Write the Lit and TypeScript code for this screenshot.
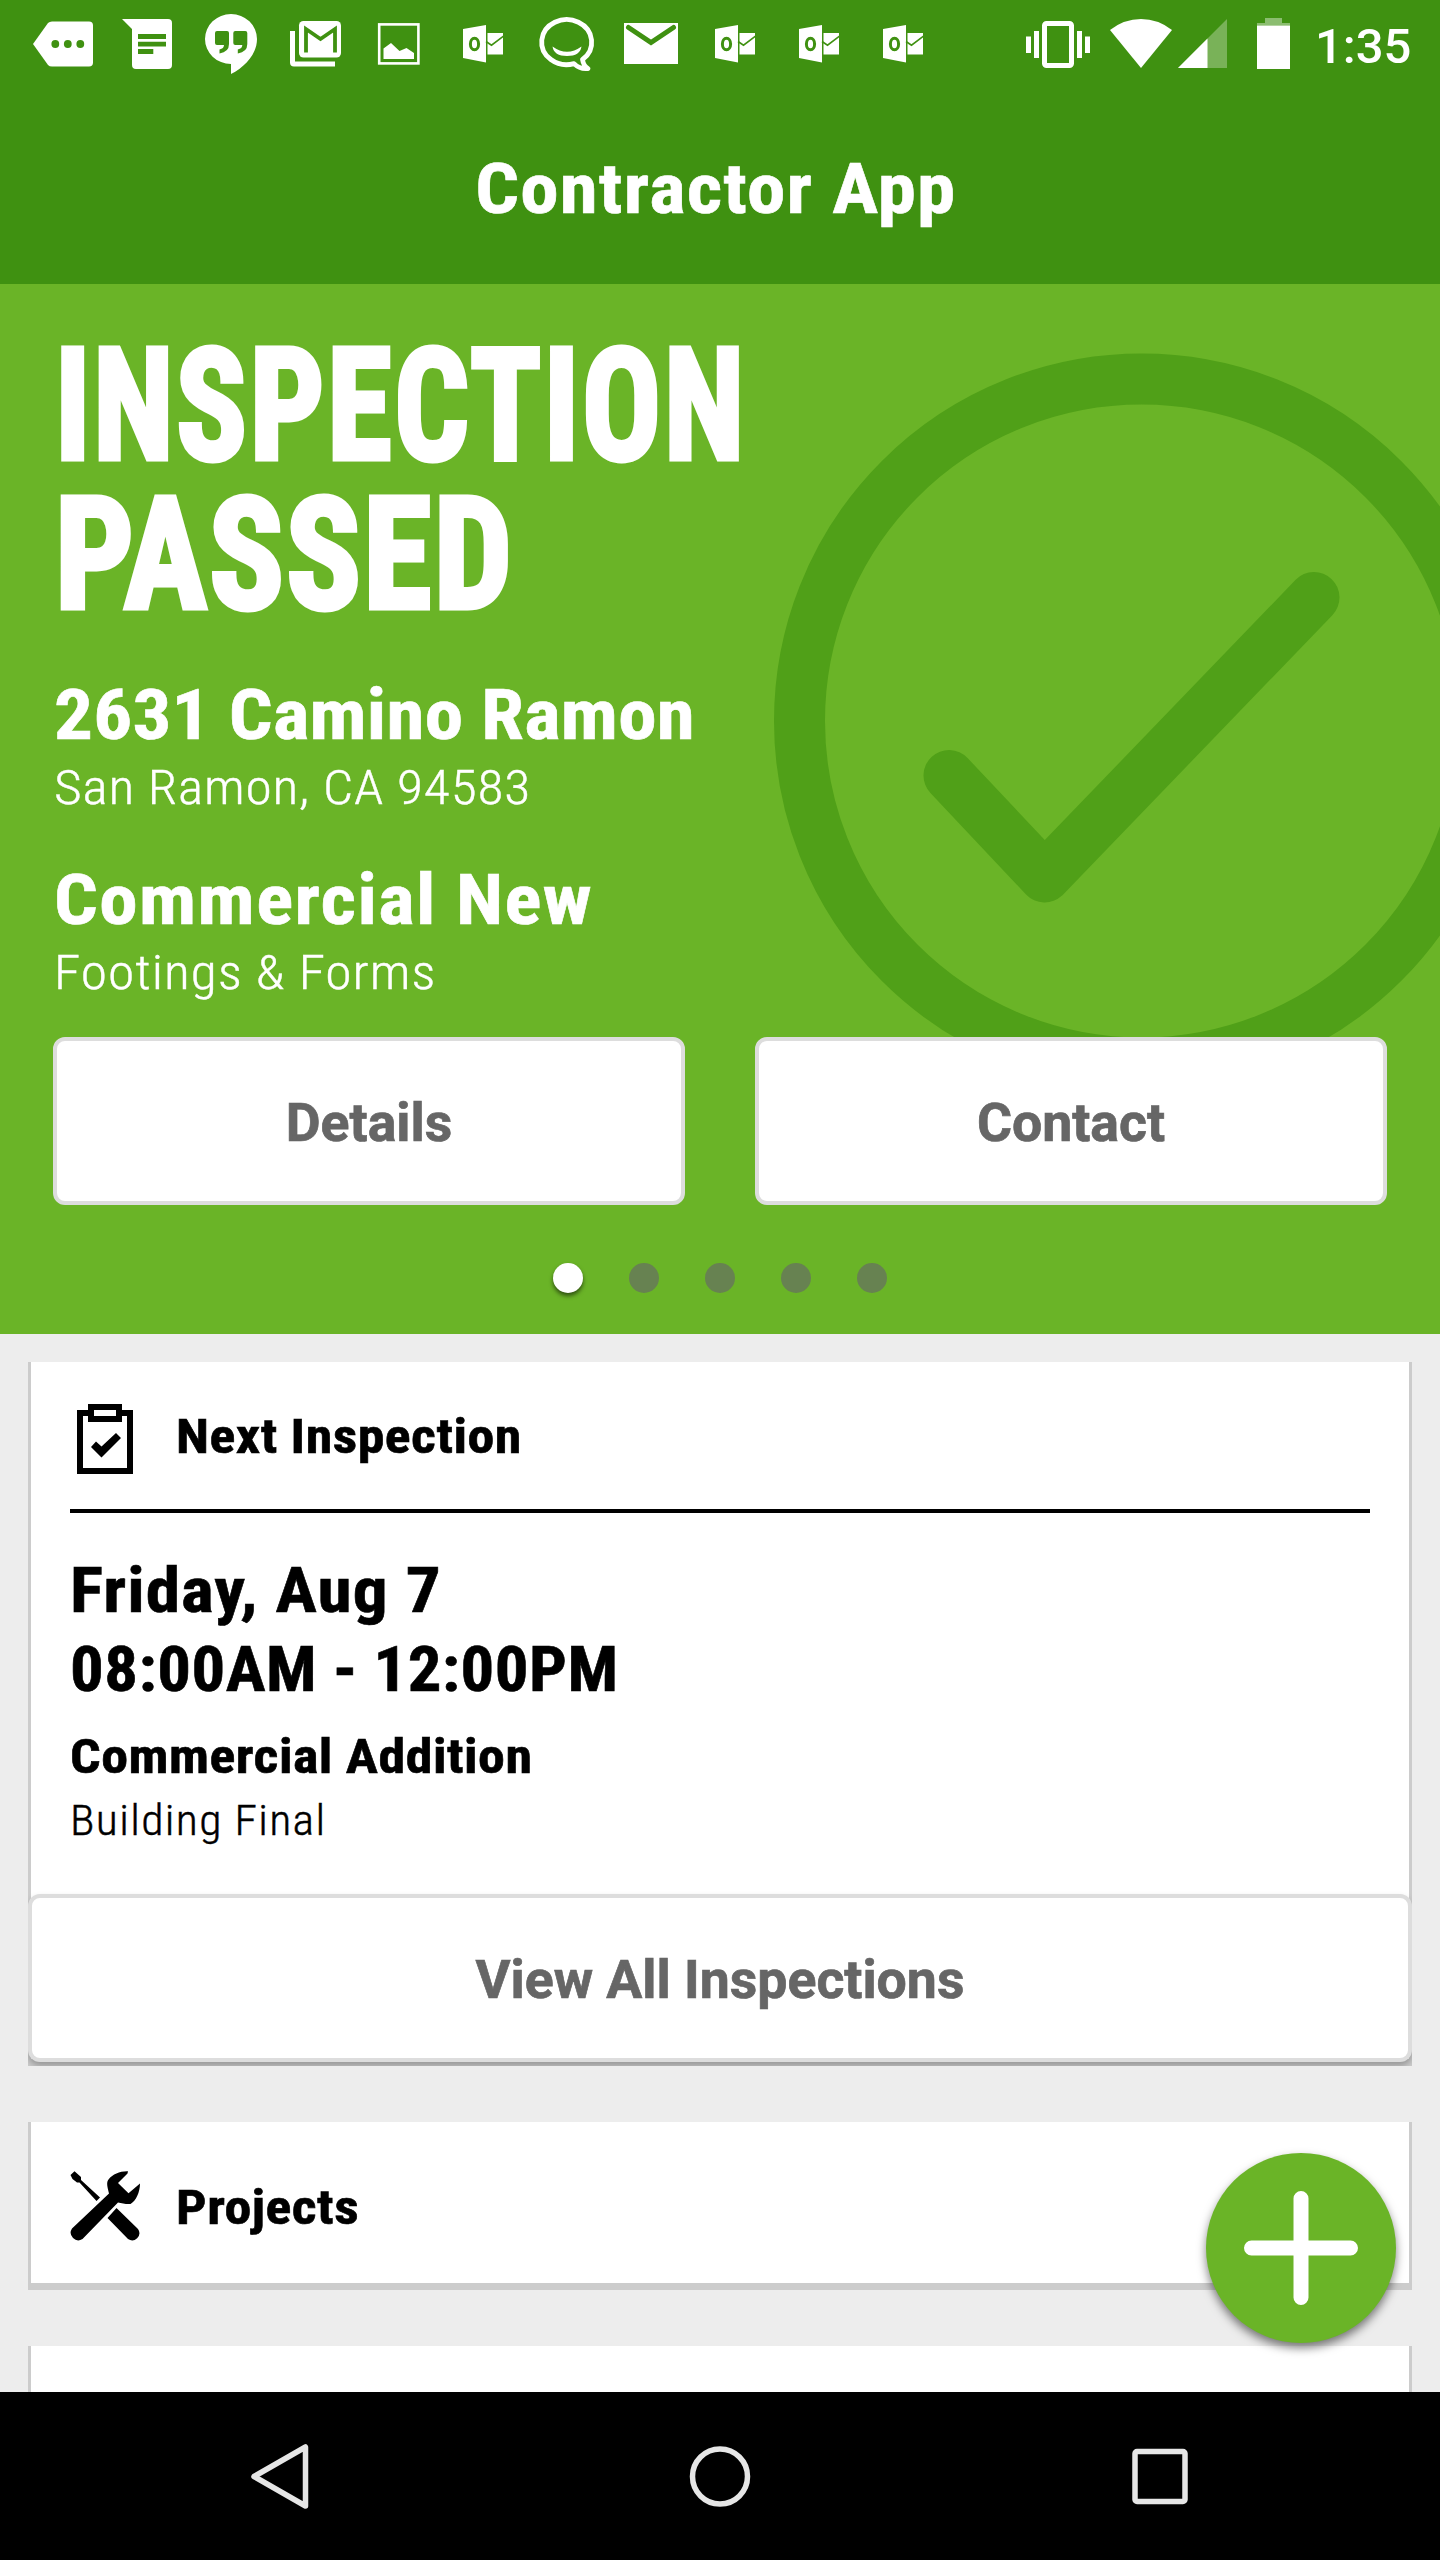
import { LitElement, html, svg, css } from "lit";

const G = "#3f9111";

const outlook = svg`
  <path d="M22 29L45 25V62.5L22 58Z" fill="#fff"/>
  <ellipse cx="33.5" cy="44" rx="4.1" ry="5.8" fill="none" stroke=${G} stroke-width="3"/>
  <path d="M46.5 33H62V54.5H46.5Z" fill="#fff"/>
  <path d="M45 41.5L50.5 45.2L62.5 36.2" fill="none" stroke=${G} stroke-width="1.6"/>`;

/* Notification icons, each drawn in an 84 x 90 cell. */
const notifications = [
  svg`<path fill="#fff" d="M12 44L27 23Q28.500 21.500 31 21.500H68a4 4 0 0 1 4 4V62.500a4 4 0 0 1-4 4H31Q28.500 66.500 27 65Z"/>
    <g fill=${G}><circle cx="34.300" cy="44" r="3.900"/><circle cx="46.800" cy="44" r="3.900"/><circle cx="59.300" cy="44" r="3.900"/></g>`,
  svg`<path fill="#fff" d="M17 19H63a4 4 0 0 1 4 4V65a4 4 0 0 1-4 4H31a4 4 0 0 1-4-4V29Z"/>
    <path fill=${G} d="M33 34H61V39H33ZM33 41.700H61V46.500H33ZM33 49H48.300V54H33Z"/>`,
  svg`<path fill="#fff" d="M42 14A26 25 0 0 0 42 64V74C56 67 68 54 68 39A26 25 0 0 0 42 14Z"/>
    <g fill=${G}><path d="M26 33a2 2 0 0 1 2-2H38a2 2 0 0 1 2 2V44Q40 52 30.500 53.500V49.500Q35 48.500 35 45H28a2 2 0 0 1-2-2Z"/>
    <path transform="translate(18.300)" d="M26 33a2 2 0 0 1 2-2H38a2 2 0 0 1 2 2V44Q40 52 30.500 53.500V49.500Q35 48.500 35 45H28a2 2 0 0 1-2-2Z"/></g>`,
  svg`<path fill="#fff" d="M17 31H22V61.500H62V66.500H21a4 4 0 0 1-4-4Z"/><rect x="26" y="21" width="42" height="36.500" rx="4.500" fill="#fff"/>
    <path fill="none" stroke=${G} stroke-width="3.800" d="M33 52.500V29L47.500 39L62 29V52.500"/>`,
  svg`<rect x="22.200" y="24.400" width="39.200" height="39" fill="none" stroke="#fff" stroke-width="2.600"/>
    <path fill="#fff" d="M26.500 48.500L34 43L42.500 51L49.500 48L57 53V59H26.500Z"/>`,
  outlook,
  svg`<path fill="none" stroke="#fff" stroke-width="4.800" stroke-linejoin="round" d="M49 63.600A25 22.500 0 1 1 57.500 59.500Q58.500 66 63 68.500Q55 69.500 49 63.600Z"/>
    <path fill="#fff" d="M27.500 46.500Q42 57 56.500 46.500Q55 56 42 56Q29 56 27.500 46.500Z"/>`,
  svg`<rect x="15" y="23" width="54" height="41" fill="#fff"/>
    <path fill="none" stroke=${G} stroke-width="5" stroke-linecap="round" d="M19.500 27.500L42 42.500L64.500 27.500"/>`,
  outlook,
  outlook,
  outlook,
];

class AppRoot extends LitElement {
  static styles = css`
    :host { display: block; }
    .screen {
      position: relative; width: 1440px; height: 2560px; overflow: hidden;
      display: flex; flex-direction: column; background: #ededed;
      font-family: Roboto, sans-serif; color: #000;
    }
    svg { display: block; flex: none; }
    .status { display: flex; height: 90px; flex: none; background: #3f9111; padding-left: 21px; box-sizing: border-box; }
    .system { display: flex; margin-left: auto; }
    .time { width: 134px; box-sizing: border-box; padding: 2px 0 0 9px; font-size: 49px; font-weight: 500; line-height: 90px; color: #fff; }
    .appbar {
      height: 194px; flex: none; box-sizing: border-box; padding: 4px 8px 0 0; background: #3f9111; color: #fff;
      display: flex; align-items: center; justify-content: center;
    }
    .din {
      font-stretch: 75%; font-weight: 700; white-space: nowrap; width: max-content;
      transform: scaleX(1.1); transform-origin: 0 0; -webkit-text-stroke: 0.6px currentColor;
    }
    .light { font-weight: 300; -webkit-text-stroke: 0.4px currentColor; transform: scaleX(1.09); }
    .title { font-size: 70px; line-height: 80px; letter-spacing: 1.1px; transform-origin: 50% 0; }
    .hero {
      position: relative; height: 1050px; flex: none; box-sizing: border-box; padding: 48px 53px 0 54px;
      background: #6ab427; color: #fff; overflow: hidden;
    }
    .mark { position: absolute; left: 774px; top: 69px; }
    .headline { margin-left: 1px; font-stretch: 75%; font-weight: 700; font-size: 155px; line-height: 149px; white-space: nowrap; -webkit-text-stroke: 5px currentColor; }
    .headline div { width: max-content; transform-origin: 0 0; }
    .l1 { transform: scaleX(0.846); letter-spacing: 3.3px; }
    .l2 { transform: scaleX(0.895); letter-spacing: 2.5px; }
    .big { font-size: 70px; line-height: 80px; }
    .sub { font-size: 49px; line-height: 60px; margin-top: 3px; }
    .address { margin-top: 45px; letter-spacing: 0.25px; }
    .city { letter-spacing: 0.75px; }
    .kind { margin-top: 42px; letter-spacing: 1.3px; }
    .task { letter-spacing: 0.95px; }
    .actions { position: relative; display: grid; grid-template-columns: 1fr 1fr; gap: 70px; margin: 34px 0 0 -1px; }
    .btn {
      display: flex; align-items: center; justify-content: center; height: 168px; box-sizing: border-box;
      border: 4px solid #ddd; border-radius: 12px; background: #fff; color: #666;
      font-family: inherit; font-size: 53.6px; font-weight: 700; padding: 3px 0 0; margin: 0;
      -webkit-text-stroke: 0.7px currentColor;
    }
    .dots { display: flex; gap: 46px; justify-content: center; margin: 58px 0 0 -2px; }
    .dot { width: 30px; height: 30px; border-radius: 50%; background: #678251; }
    .dot.on { background: #fff; box-shadow: 0 3px 4px rgba(0, 0, 0, 0.55); }
    .list { flex: 1; min-height: 0; overflow: hidden; display: flex; flex-direction: column; gap: 56px; padding: 28px 28px 0; }
    .card { flex: none; box-sizing: border-box; background: #fff; border: solid #ccc; border-width: 0 3px 7px; padding: 0 39px; clip-path: inset(0); }
    .head { display: flex; align-items: center; gap: 36px; height: 147px; padding-top: 3px; box-sizing: border-box; }
    .head .din { font-size: 49px; line-height: 60px; letter-spacing: 0.45px; }
    .head.ruled { border-bottom: 4px solid #000; height: 151px; }
    .head.ruled svg { margin-top: 4px; }
    .head.plain { height: 161px; padding-top: 11px; }
    .head.plain svg { margin-bottom: 4px; }
    .when { font-size: 63px; line-height: 79px; margin-top: 38px; }
    .day { letter-spacing: 0.95px; }
    .hours { letter-spacing: 0.45px; transform: scaleX(1.06); }
    .scope { font-size: 49px; line-height: 60px; margin-top: 18px; letter-spacing: 0.45px; }
    .stage { font-size: 42px; line-height: 54px; margin-top: 7px; letter-spacing: 1.2px; }
    .all { width: calc(100% + 84px); margin: 46px -42px -3px; box-shadow: 0 4px 6px rgba(0, 0, 0, 0.25); }
    .stub { height: 168px; }
    .fab {
      position: absolute; left: 1206px; top: 2153px; width: 190px; height: 190px; border-radius: 50%;
      background: #6ab427; box-shadow: 0 5px 10px rgba(0, 0, 0, 0.5);
    }
    .nav { display: flex; justify-content: center; height: 168px; flex: none; background: #000; }
  `;

  render() {
    return html`
      <div class="screen">
        <div class="status">
          ${notifications.map((n) => html`<svg width="84" height="90" viewBox="0 0 84 90">${n}</svg>`)}
          <div class="system">
            <svg width="80" height="90" viewBox="1020 0 80 90">
              <rect x="1044.5" y="23.500" width="27" height="42" rx="2" fill="none" stroke="#fff" stroke-width="5"/>
              <path fill="#fff" d="M1026 36.500h5V53h-5ZM1034 31h5V58h-5ZM1077 31h5V58h-5ZM1085 36.500h5V53h-5Z"/>
            </svg>
            <svg width="76" height="90" viewBox="1100 0 76 90"><path fill="#fff" d="M1141 68L1110 30Q1124 19 1141 19T1172 30Z"/></svg>
            <svg width="60" height="90" viewBox="1176 0 60 90">
              <path fill="#fff" fill-opacity=".3" d="M1178 68L1227 19V68Z"/><path fill="#fff" d="M1178 68L1207.500 38.500V68Z"/>
            </svg>
            <svg width="70" height="90" viewBox="1236 0 70 90">
              <path fill="#fff" fill-opacity=".4" d="M1265 18H1282V23H1290V25.500H1257V23H1265Z"/><path fill="#fff" d="M1257 25.500H1290V69H1257Z"/>
            </svg>
            <div class="time">1:35</div>
          </div>
        </div>
        <div class="appbar"><div class="din title">Contractor App</div></div>
        <div class="hero">
          <svg class="mark" width="736" height="736" viewBox="774 353 736 736">
            <g fill="none" stroke="#50a018" stroke-width="51" stroke-linecap="round" stroke-linejoin="round">
              <circle cx="1141.500" cy="721" r="342"/><path d="M949 775.500L1044.600 877L1314 597.500"/>
            </g>
          </svg>
          <div class="headline"><div class="l1">INSPECTION</div><div class="l2">PASSED</div></div>
          <div class="din big address">2631 Camino Ramon</div>
          <div class="din light sub city">San Ramon, CA 94583</div>
          <div class="din big kind">Commercial New</div>
          <div class="din light sub task">Footings &amp; Forms</div>
          <div class="actions"><button class="btn">Details</button><button class="btn">Contact</button></div>
          <div class="dots">${[0, 1, 2, 3, 4].map((i) => html`<div class="dot ${i === 0 ? "on" : ""}"></div>`)}</div>
        </div>
        <div class="list">
          <div class="card">
            <div class="head ruled">
              <svg width="70" height="70" viewBox="70 1404 70 70">
                <path fill="none" stroke="#000" stroke-width="6" d="M91 1413H80V1471H130V1413H119"/>
                <rect x="91" y="1407" width="28" height="12" fill="none" stroke="#000" stroke-width="6"/>
                <path d="M91 1447L96 1441.600L101.500 1446.500L116 1433L121 1438L101.500 1457.500Z"/>
              </svg>
              <div class="din">Next Inspection</div>
            </div>
            <div class="when"><div class="din day">Friday, Aug 7</div><div class="din hours">08:00AM - 12:00PM</div></div>
            <div class="din scope">Commercial Addition</div>
            <div class="din light stage">Building Final</div>
            <button class="btn all">View All Inspections</button>
          </div>
          <div class="card">
            <div class="head plain">
              <svg width="70" height="70" viewBox="0 0 70 70">
                <path d="M.500 4L4.500 .300L11 6V9L30 26.500L26.500 30L9.500 11.500H7L2.500 8Z"/>
                <path d="M46.500 37L68 58A7.200 7.200 0 0 1 58 68L37.500 47Z"/>
                <path d="M58 .300C50 0 43 3 38.500 8.500C36 12 37.500 16 39 22.500L2 57.500A7.600 7.600 0 0 0 12.500 68L48 31.500C52 32 56 33.500 60.500 33C66 30 70 21 70 12.500L58.500 22.200L48 12L57.500 2.500Z"/>
              </svg>
              <div class="din">Projects</div>
            </div>
          </div>
          <div class="card stub"></div>
        </div>
        <div class="nav">
          <svg width="440" height="168" viewBox="60 2392 440 168"><path fill="none" stroke="#e6e6e6" stroke-width="5.500" stroke-linejoin="round" d="M254 2476.500L305.500 2447V2506Z"/></svg>
          <svg width="440" height="168" viewBox="500 2392 440 168"><circle cx="720" cy="2476.500" r="27.500" fill="none" stroke="#e6e6e6" stroke-width="5.500"/></svg>
          <svg width="440" height="168" viewBox="940 2392 440 168"><rect x="1135" y="2451.500" width="50" height="50" rx="2" fill="none" stroke="#e6e6e6" stroke-width="5.500"/></svg>
        </div>
        <svg class="fab" width="190" height="190" viewBox="0 0 190 190">
          <path d="M45.500 95H144.500M95 45.500V144.500" stroke="#fff" stroke-width="15" stroke-linecap="round"/>
        </svg>
      </div>
    `;
  }
}
customElements.define("app-root", AppRoot);
